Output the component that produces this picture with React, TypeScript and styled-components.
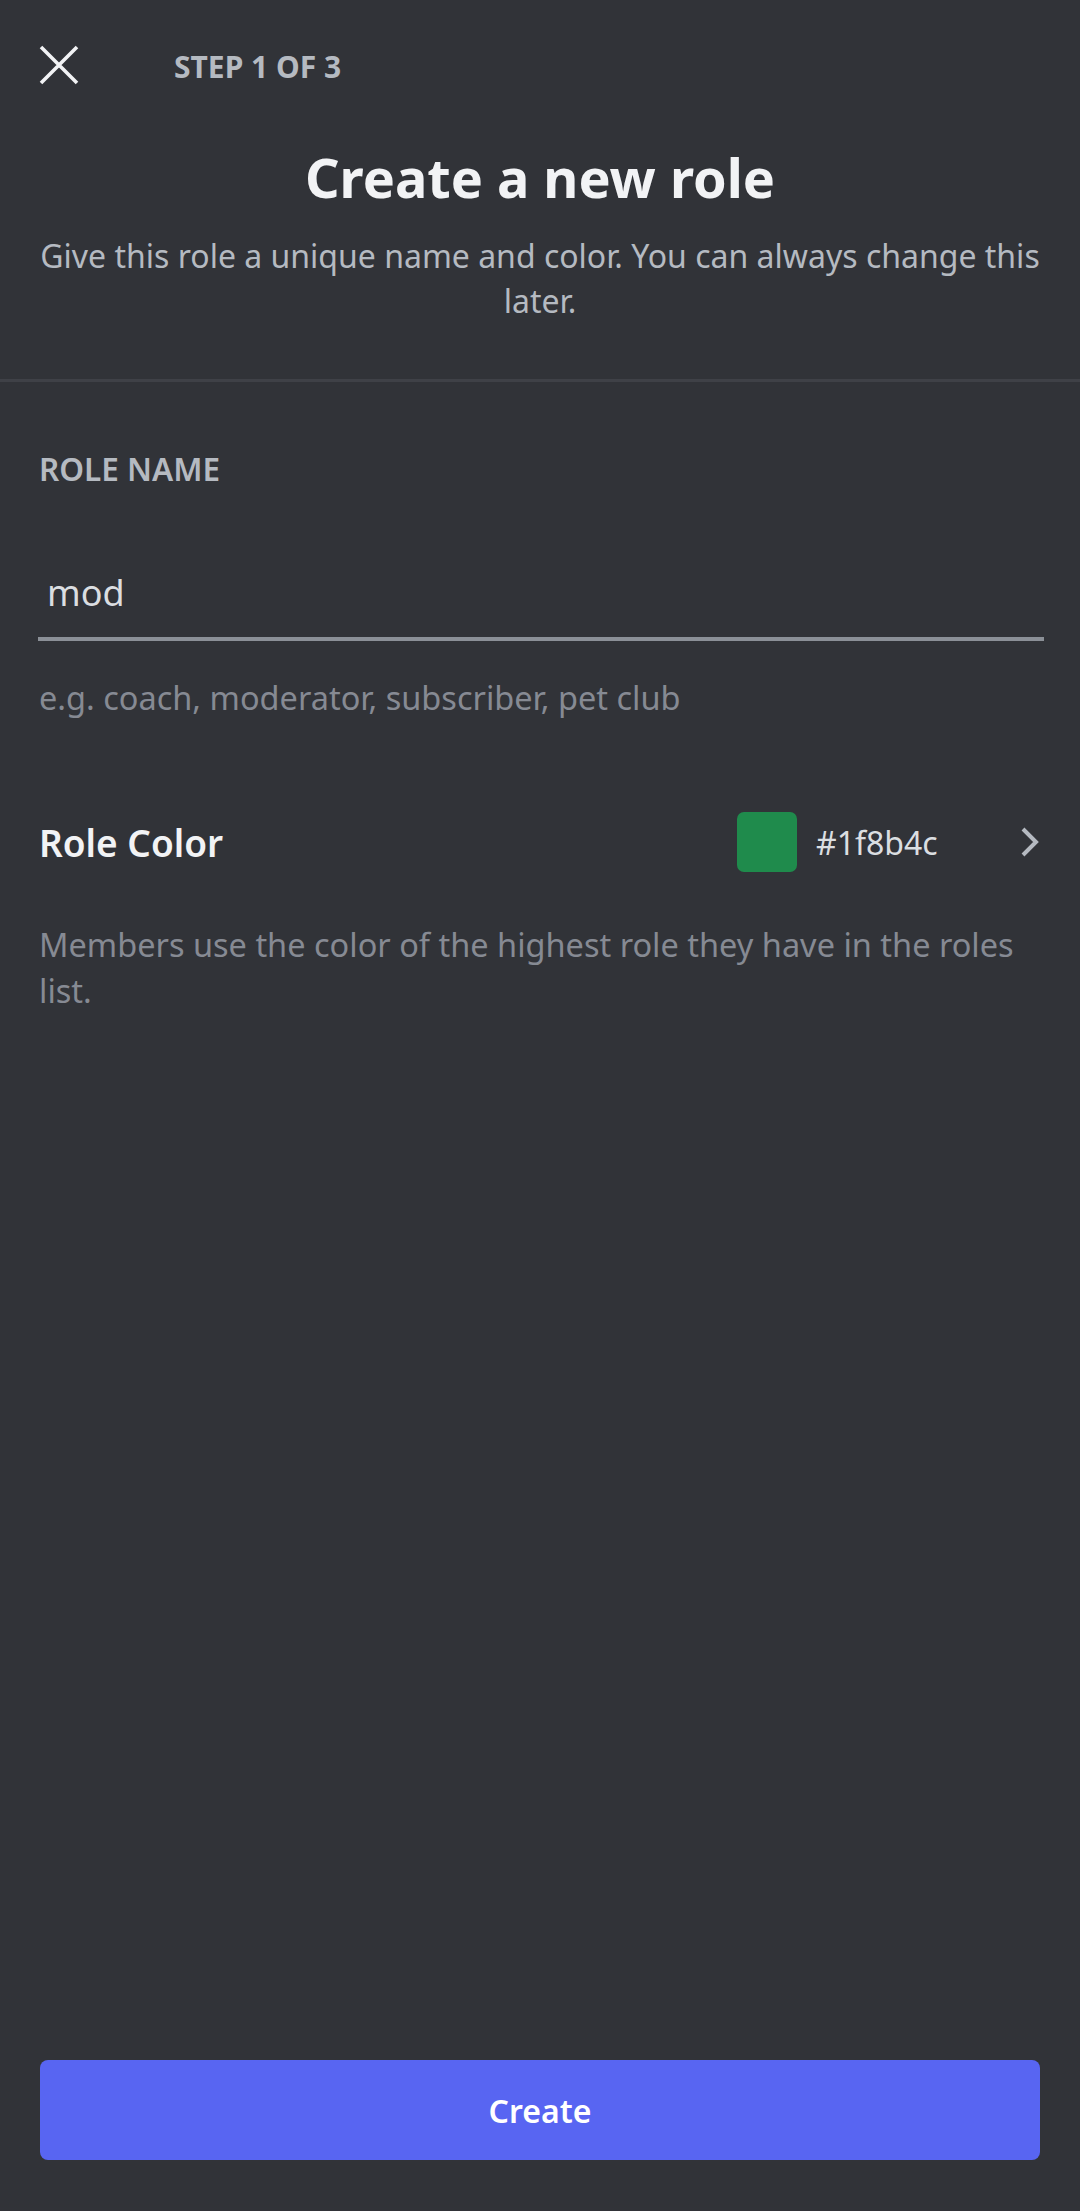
import React from "react";
import styled, { createGlobalStyle } from "styled-components";

const GlobalStyle = createGlobalStyle`
  html, body {
    margin: 0;
    padding: 0;
    background: #313338;
  }
  body {
    font-family: "Noto Sans", "Open Sans", sans-serif;
    -webkit-font-smoothing: antialiased;
  }
  * {
    box-sizing: border-box;
  }
`;

const Screen = styled.div`
  min-height: 100vh;
  display: flex;
  flex-direction: column;
  background: #313338;
`;

const TopSection = styled.div`
  padding: 0 36px 56px;
  border-bottom: 3px solid #3f4147;
`;

const Header = styled.div`
  height: 130px;
  padding-left: 3px;
  display: flex;
  align-items: center;
`;

const CloseButton = styled.button`
  width: 40px;
  height: 40px;
  padding: 0;
  margin: 0;
  border: none;
  background: none;
  display: flex;
  align-items: center;
  justify-content: center;
  color: #f2f3f5;
`;

const StepLabel = styled.div`
  margin-left: 95px;
  padding-top: 3px;
  font-size: 30px;
  font-weight: 700;
  line-height: 34px;
  color: #b5bac1;
`;

const Title = styled.h1`
  margin: 14px 0 0;
  font-size: 54px;
  font-weight: 700;
  line-height: 66px;
  color: #f2f3f5;
  text-align: center;
`;

const Subtitle = styled.p`
  margin: 23px 0 0;
  font-size: 32px;
  line-height: 45px;
  color: #b5bac1;
  text-align: center;
`;

const Body = styled.div`
  flex: 1;
  display: flex;
  flex-direction: column;
  padding: 0 39px;
`;

const FieldLabel = styled.div`
  margin-top: 69px;
  font-size: 31.5px;
  font-weight: 600;
  line-height: 36px;
  color: #b5bac1;
`;

const NameInput = styled.input`
  margin: 83px 0 0 -1px;
  width: calc(100% + 4px);
  padding: 0 0 23px 9px;
  border: none;
  border-bottom: 4px solid #8b9097;
  background: transparent;
  outline: none;
  font-family: inherit;
  font-size: 36px;
  line-height: 44px;
  height: 71px;
  color: #dbdee1;
`;

const Hint = styled.div<{ $top: number; $lineHeight: number }>`
  margin-top: ${(p) => p.$top}px;
  font-size: 32.5px;
  line-height: ${(p) => p.$lineHeight}px;
  color: #868a93;
`;

const ColorRow = styled.div`
  margin-top: 93px;
  height: 60px;
  display: flex;
  align-items: center;
`;

const RowTitle = styled.div`
  flex: 1;
  font-size: 37px;
  font-weight: 600;
  color: #f2f3f5;
`;

const Swatch = styled.div<{ $color: string }>`
  width: 60px;
  height: 60px;
  border-radius: 7px;
  background: ${(p) => p.$color};
`;

const HexValue = styled.div`
  margin-left: 19px;
  width: 204px;
  font-size: 32px;
  color: #dbdee1;
`;

const Chevron = styled.svg`
  margin-right: 1px;
  color: #b5bac1;
`;

const Spacer = styled.div`
  flex: 1;
`;

const CreateButton = styled.button`
  margin: 0 1px 51px;
  height: 100px;
  border: none;
  border-radius: 8px;
  background: #5865f2;
  color: #ffffff;
  font-family: inherit;
  font-size: 32px;
  font-weight: 600;
`;

export default function App() {
  const roleColor = "#1f8b4c";

  return (
    <>
      <GlobalStyle />
      <Screen>
        <TopSection>
          <Header>
            <CloseButton aria-label="Close">
              <svg width="40" height="40" viewBox="0 0 40 40">
                <path
                  d="M2 2 L38 38 M38 2 L2 38"
                  stroke="currentColor"
                  strokeWidth="3.6"
                  fill="none"
                />
              </svg>
            </CloseButton>
            <StepLabel>STEP 1 OF 3</StepLabel>
          </Header>
          <Title>Create a new role</Title>
          <Subtitle>
            Give this role a unique name and color. You can always change this
            later.
          </Subtitle>
        </TopSection>

        <Body>
          <FieldLabel>ROLE NAME</FieldLabel>
          <NameInput defaultValue="mod" />
          <Hint $top={36} $lineHeight={42}>
            e.g. coach, moderator, subscriber, pet club
          </Hint>

          <ColorRow>
            <RowTitle>Role Color</RowTitle>
            <Swatch $color={roleColor} />
            <HexValue>{roleColor}</HexValue>
            <Chevron width="20" height="30" viewBox="0 0 20 30">
              <path
                d="M3 2 L16 15 L3 28"
                stroke="currentColor"
                strokeWidth="4"
                fill="none"
              />
            </Chevron>
          </ColorRow>
          <Hint $top={50} $lineHeight={46}>
            Members use the color of the highest role they have in the roles
            list.
          </Hint>

          <Spacer />
          <CreateButton>Create</CreateButton>
        </Body>
      </Screen>
    </>
  );
}
